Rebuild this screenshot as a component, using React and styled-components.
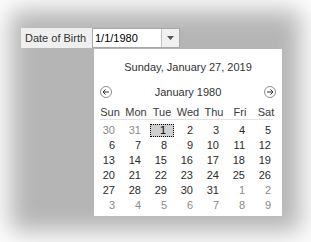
import * as React from "react"
import styled, { createGlobalStyle } from "styled-components"

const GlobalStyle = createGlobalStyle`
  html, body {
    margin: 0;
    padding: 0;
    background: #fff;
  }
  body {
    font-family: "Liberation Sans", Arial, sans-serif;
    font-size: 11px;
  }
`

const Stage = styled.div`
  width: 311px;
  height: 242px;
  box-sizing: border-box;
  padding: 28px 0 0 21px;
  background: #b5b5b5;
  box-shadow: inset 0 0 24px 10px #fff;
  overflow: hidden;
`

const Field = styled.div`
  position: relative;
  display: flex;
  height: 20px;
`

const Label = styled.div`
  width: 71px;
  box-sizing: border-box;
  padding-left: 4px;
  background: #efefef;
  color: #333;
  line-height: 20px;
`

const Combo = styled.div`
  display: flex;
  width: 88px;
  height: 20px;
  box-sizing: border-box;
  border: 1px solid #a8a8a8;
  background: #fff;
`

const Value = styled.div`
  flex: 1;
  padding-left: 2px;
  color: #000;
  line-height: 18px;
`

const DropButton = styled.div`
  width: 17px;
  display: flex;
  align-items: center;
  justify-content: center;
  background: #f0f0f0;
  border-left: 1px solid #c4c4c4;
`

const Popup = styled.div`
  position: absolute;
  top: 21px;
  left: 73px;
  width: 188px;
  height: 167px;
  box-sizing: border-box;
  padding: 10px 3px 3px;
  background: #fff;
  color: #333;
`

const Title = styled.div`
  text-align: center;
  line-height: 16px;
  height: 16px;
`

const Nav = styled.div`
  margin-top: 9px;
  height: 16px;
  padding: 0 3px;
  display: flex;
  align-items: center;
  justify-content: space-between;
`

const Month = styled.div`
  line-height: 16px;
`

const Grid = styled.div`
  display: grid;
  grid-template-columns: repeat(7, 26px);
`

const HeadRow = styled(Grid)`
  margin-top: 6px;
  height: 13px;
`

const Head = styled.div`
  text-align: center;
  line-height: 13px;
  color: #3a3a3a;
`

const Divider = styled.div`
  height: 1px;
  margin: 0 6px 0 3px;
  background: #e2e2e2;
`

const DayGrid = styled(Grid)`
  margin-top: 3px;
  grid-auto-rows: 15px;
`

const Day = styled.div`
  text-align: right;
  padding-right: 8px;
  line-height: 15px;
  color: ${props => (props.$other ? "#8a8a8a" : "#2b2b2b")};
  ${props =>
    props.$selected &&
    `
    margin: 1px;
    padding-right: 8px;
    line-height: 13px;
    background: #cfcfcf;
    outline: 1px dotted #000;
    outline-offset: -1px;
    color: #000;
  `}
`

const NavArrow = ({ dir }) => (
  <svg width="12" height="12" viewBox="0 0 12 12">
    <circle cx="6" cy="6" r="5.5" fill="#fff" stroke="#8e8e8e" />
    <g
      transform={dir === "right" ? "translate(12 0) scale(-1 1)" : undefined}
      fill="none"
      stroke="#333"
      strokeWidth="1"
    >
      <path d="M9 6H3.5" />
      <path d="M5.5 3.5L3 6L5.5 8.5" />
    </g>
  </svg>
)

const Caret = () => (
  <svg width="7" height="4" viewBox="0 0 7 4">
    <polygon points="0,0 7,0 3.5,4" fill="#555" />
  </svg>
)

const headers = ["Sun", "Mon", "Tue", "Wed", "Thu", "Fri", "Sat"]

const buildDays = () => {
  const days = [
    { n: 30, other: true },
    { n: 31, other: true },
  ]
  for (let i = 1; i <= 31; i++) days.push({ n: i })
  for (let i = 1; days.length < 42; i++) days.push({ n: i, other: true })
  return days
}

const App = () => {
  const days = buildDays()

  return (
    <>
      <GlobalStyle />
      <Stage>
        <Field>
          <Label>Date of Birth</Label>
          <Combo>
            <Value>1/1/1980</Value>
            <DropButton>
              <Caret />
            </DropButton>
          </Combo>
          <Popup>
            <Title>Sunday, January 27, 2019</Title>
            <Nav>
              <NavArrow dir="left" />
              <Month>January 1980</Month>
              <NavArrow dir="right" />
            </Nav>
            <HeadRow>
              {headers.map(h => (
                <Head key={h}>{h}</Head>
              ))}
            </HeadRow>
            <Divider />
            <DayGrid>
              {days.map((d, i) => (
                <Day
                  key={i}
                  $other={d.other}
                  $selected={!d.other && d.n === 1}
                >
                  {d.n}
                </Day>
              ))}
            </DayGrid>
          </Popup>
        </Field>
      </Stage>
    </>
  )
}

export default App
